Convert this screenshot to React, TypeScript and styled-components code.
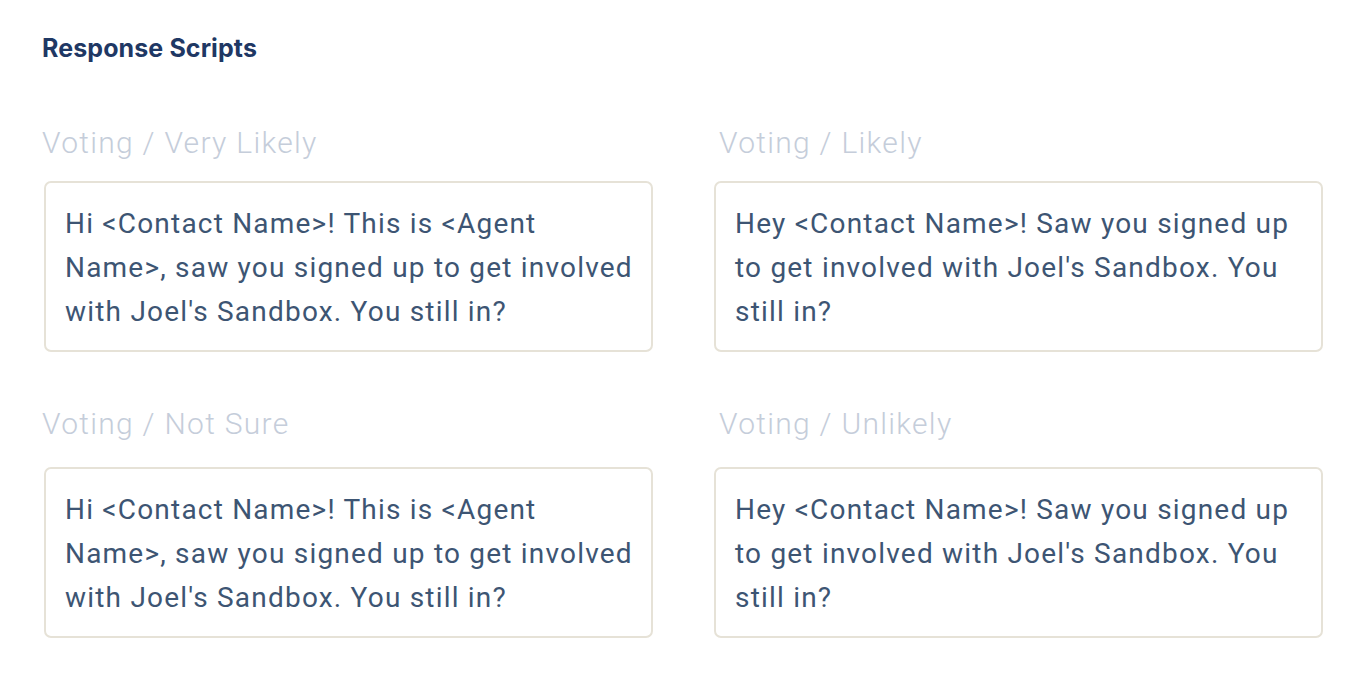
import React from 'react'
import styled, { createGlobalStyle } from 'styled-components'

const GlobalStyle = createGlobalStyle`
  html, body {
    margin: 0;
    padding: 0;
    background: #ffffff;
  }
  body {
    font-family: "Roboto", "Liberation Sans", sans-serif;
  }
`;

const Page = styled.div`
  padding: 30px 43px 0 44px;
`;

const Title = styled.h2`
  margin: 0 0 0 -2px;
  font-family: "Inter", "Roboto", sans-serif;
  font-size: 25px;
  font-weight: 700;
  letter-spacing: 0.1px;
  color: #1f3864;
  line-height: 36px;
`;

const Grid = styled.div`
  display: grid;
  grid-template-columns: 1fr 1fr;
  column-gap: 61px;
  row-gap: 50px;
  margin-top: 55px;
`;

const Script = styled.div`
  display: flex;
  flex-direction: column;
`;

const Label = styled.div<{ $gap: number; $indent: number }>`
  margin-left: ${(p) => p.$indent}px;
  font-size: 30px;
  font-weight: 300;
  letter-spacing: 1.3px;
  color: #c5cdda;
  line-height: 44px;
  height: 44px;
  margin-bottom: ${(p) => p.$gap}px;
`;

const Box = styled.div`
  border: 2px solid #e6e2d7;
  border-radius: 7px;
  padding: 19px 16px 16px 19px;
  min-height: 132px;
  font-size: 28px;
  letter-spacing: 1.2px;
  color: #3d5573;
  line-height: 44px;
`;

const scripts = [
  {
    label: 'Voting / Very Likely',
    text: "Hi <Contact Name>! This is <Agent Name>, saw you signed up to get involved with Joel's Sandbox. You still in?",
  },
  {
    label: 'Voting / Likely',
    text: "Hey <Contact Name>! Saw you signed up to get involved with Joel's Sandbox. You still in?",
  },
  {
    label: 'Voting / Not Sure',
    text: "Hi <Contact Name>! This is <Agent Name>, saw you signed up to get involved with Joel's Sandbox. You still in?",
  },
  {
    label: 'Voting / Unlikely',
    text: "Hey <Contact Name>! Saw you signed up to get involved with Joel's Sandbox. You still in?",
  },
];

export default function App() {
  return (
    <>
      <GlobalStyle />
      <Page>
        <Title>Response Scripts</Title>
        <Grid>
          {scripts.map((s, i) => (
            <Script key={s.label}>
              <Label $gap={i < 2 ? 16 : 21} $indent={i % 2 === 0 ? -2 : 5}>
                {s.label}
              </Label>
              <Box>{s.text}</Box>
            </Script>
          ))}
        </Grid>
      </Page>
    </>
  )
}
